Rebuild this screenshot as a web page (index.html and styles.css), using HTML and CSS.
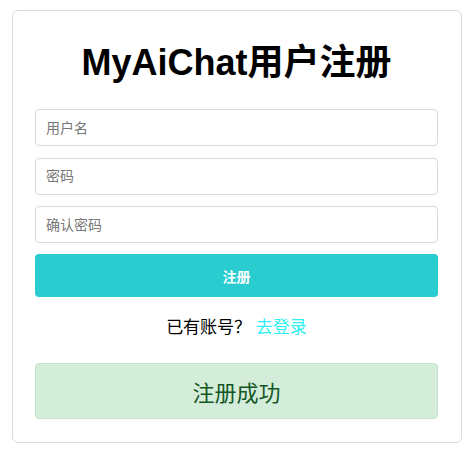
FILE: index.html
```html
<!DOCTYPE html>
<html lang="zh-CN">
<head>
<meta charset="utf-8">
<title>MyAiChat用户注册</title>
<link rel="stylesheet" href="styles.css">
</head>
<body>
<div class="card">
  <h1 class="title">MyAiChat用户注册</h1>
  <form class="form">
    <input class="field" type="text" placeholder="用户名">
    <input class="field" type="password" placeholder="密码">
    <input class="field" type="password" placeholder="确认密码">
    <button class="submit" type="button">注册</button>
  </form>
  <p class="login">已有账号？ <a class="login-link" href="#">去登录</a></p>
  <div class="alert">注册成功</div>
</div>
</body>
</html>
```
FILE: styles.css
```css
html, body {
  margin: 0;
  padding: 0;
  background: #fff;
}
body {
  font-family: "Liberation Sans", "Noto Sans CJK SC", sans-serif;
}
.card {
  box-sizing: border-box;
  width: 450px;
  height: 433px;
  margin: 10px 0 0 12px;
  border: 1px solid #dcdcdc;
  border-radius: 6px;
  padding: 0 23px 0 22px;
  display: flex;
  flex-direction: column;
}
.title {
  margin: 31px 0 25px;
  font-size: 36px;
  line-height: 42px;
  font-weight: bold;
  text-align: center;
  color: #000;
}
.form {
  display: flex;
  flex-direction: column;
  gap: 11.5px;
  margin: 0;
}
.field {
  box-sizing: border-box;
  height: 37px;
  width: 100%;
  margin: 0;
  padding: 0 10px;
  border: 1px solid #d9d9d9;
  border-radius: 4px;
  font-family: "Liberation Sans", "Noto Sans CJK SC", sans-serif;
  font-size: 14px;
  color: #333;
  outline: none;
}
.field::placeholder {
  color: #777;
}
.submit {
  margin-top: -0.5px;
  height: 43px;
  width: 100%;
  border: none;
  border-radius: 4px;
  background: #29cdcf;
  color: #fff;
  font-family: "Liberation Sans", "Noto Sans CJK SC", sans-serif;
  font-size: 14px;
  font-weight: bold;
  padding: 0;
}
.login {
  margin: 19px 0 23px;
  line-height: 24px;
  font-size: 17px;
  text-align: center;
  color: #000;
}
.login-link {
  color: #2ef0f2;
  text-decoration: none;
}
.alert {
  box-sizing: border-box;
  height: 56px;
  display: flex;
  align-items: center;
  justify-content: center;
  background: #d4edda;
  border: 1px solid #c3e6cb;
  border-radius: 4px;
  color: #155724;
  font-size: 22px;
}
```
